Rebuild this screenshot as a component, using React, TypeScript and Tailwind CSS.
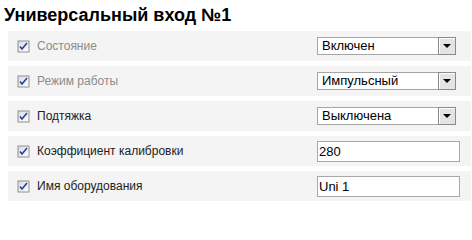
import React from "react";

type Row = {
  label: string;
  muted?: boolean;
  kind: "select" | "input";
  value: string;
};

const rows: Row[] = [
  { label: "Состояние", muted: true, kind: "select", value: "Включен" },
  { label: "Режим работы", muted: true, kind: "select", value: "Импульсный" },
  { label: "Подтяжка", kind: "select", value: "Выключена" },
  { label: "Коэффициент калибровки", kind: "input", value: "280" },
  { label: "Имя оборудования", kind: "input", value: "Uni 1" },
];

function Check() {
  return (
    <svg width="13" height="13" viewBox="0 0 13 13" className="shrink-0">
      <defs>
        <linearGradient id="cb" x1="0" y1="0" x2="1" y2="1">
          <stop offset="0" stopColor="#dcdcdc" />
          <stop offset="1" stopColor="#ffffff" />
        </linearGradient>
      </defs>
      <rect x="0.5" y="0.5" width="12" height="12" fill="#8e8f8f" />
      <rect x="1.5" y="1.5" width="10" height="10" fill="url(#cb)" />
      <path d="M3 6.5 L5 9 L10 3" stroke="#2a3fa0" strokeWidth="1.6" fill="none" />
    </svg>
  );
}

function Select({ value }: { value: string }) {
  return (
    <div className="flex w-[139px] h-[18px] border border-[#a5a5a5] bg-white">
      <span className="flex-1 pl-[4px] text-[13px] leading-[16px] text-black">
        {value}
      </span>
      <div className="w-[18px] h-[18px] -mt-[1px] -mr-[1px] border border-[#8a8a8a] bg-[#e4e4e4] shadow-[inset_1px_1px_0_#ffffff] flex items-center justify-center">
        <svg width="8" height="4" viewBox="0 0 8 4">
          <path d="M0 0 H8 L4 4 Z" fill="#000" />
        </svg>
      </div>
    </div>
  );
}

function Input({ value }: { value: string }) {
  return (
    <div className="w-[143px] h-[21px] border border-[#a8a8a8] bg-white pl-[1px] text-[13px] leading-[19px] text-black">
      {value}
    </div>
  );
}

export default function App() {
  return (
    <div
      className="w-[472px] h-[208px] bg-white overflow-hidden"
      style={{ fontFamily: '"Liberation Sans", Arial, sans-serif' }}
    >
      <h1 className="pl-[4px] pt-[5px] h-[31px] text-[18px] font-bold leading-[21px] text-black">
        Универсальный вход №1
      </h1>
      <div className="flex flex-col gap-[5px] pl-[8px] pr-[1px]">
        {rows.map((r) => (
          <div key={r.label} className="flex items-center h-[30px] bg-[#f4f4f4]">
            <div className="flex items-center w-[309px] pl-[9px] gap-[7px]">
              <Check />
              <span
                className={
                  "text-[12px] " + (r.muted ? "text-[#8c8c8c]" : "text-[#222222]")
                }
              >
                {r.label}
              </span>
            </div>
            {r.kind === "select" ? <Select value={r.value} /> : <Input value={r.value} />}
          </div>
        ))}
      </div>
    </div>
  );
}
